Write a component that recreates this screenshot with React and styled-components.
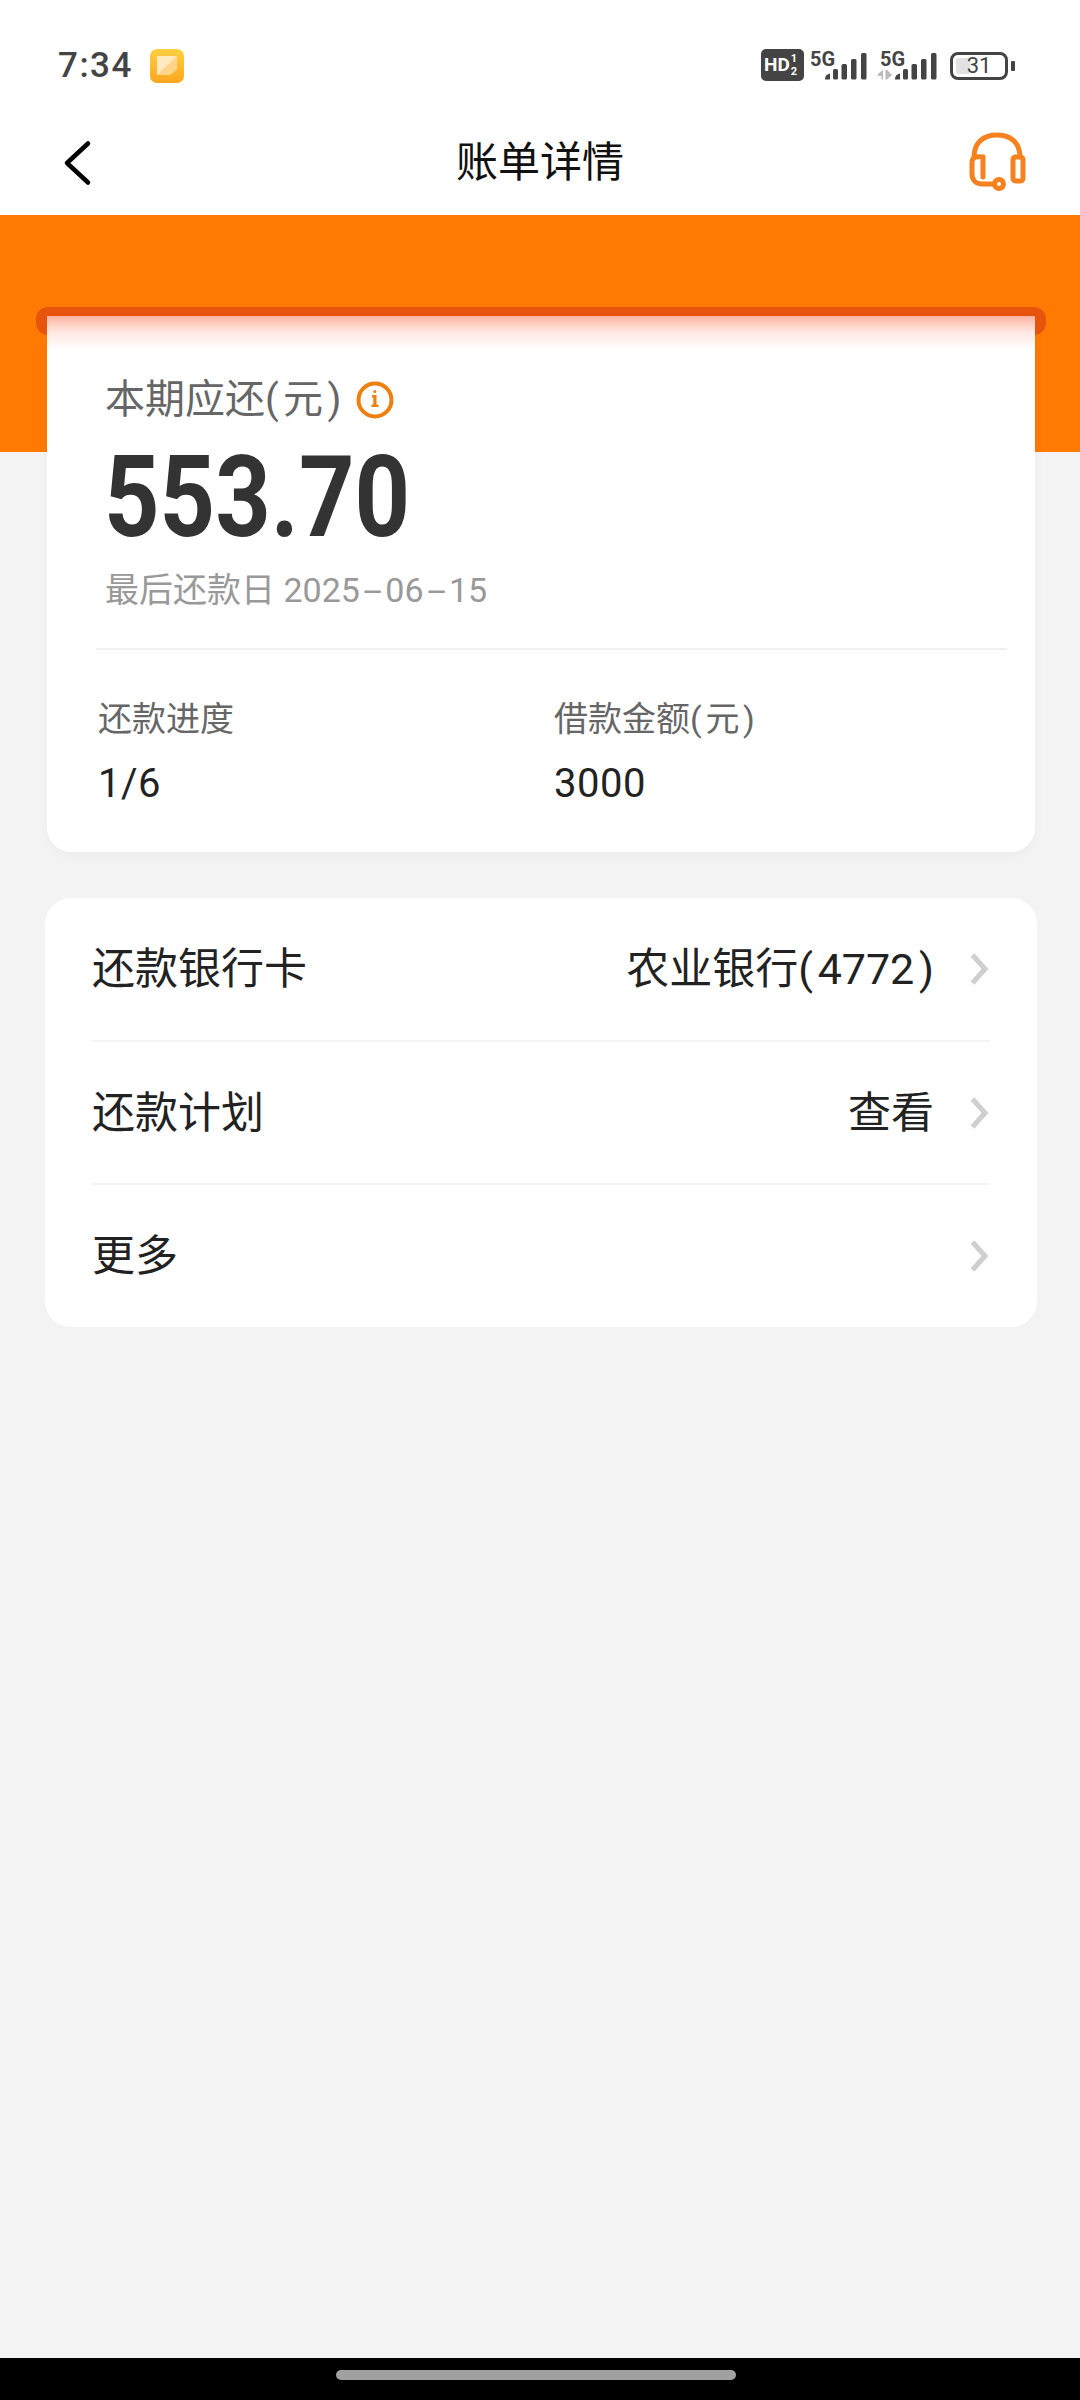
import React from "react";
import styled, { createGlobalStyle } from "styled-components";

const Global = createGlobalStyle`
  html, body { margin: 0; padding: 0; background: #f3f3f3; }
  * { box-sizing: border-box; }
`;
const FONT = `Roboto, "Noto Sans CJK SC", sans-serif`;

const Page = styled.div`
  width: 1080px; height: 2400px; display: flex; flex-direction: column;
  background: #f3f3f3; font-family: ${FONT}; overflow: hidden;
`;
const StatusBar = styled.div`
  height: 130px; background: #fff; display: flex; align-items: flex-start;
  justify-content: space-between; padding: 49px 65px 0 58px;
`;
const StatusLeft = styled.div`display: flex; align-items: center; gap: 17px; height: 34px;`;
const Time = styled.span`font-size: 35px; font-weight: 500; color: #444; letter-spacing: 1.5px; line-height: 34px;`;
const NoteIcon = styled.svg`width: 34px; height: 34px; display: block;`;
const StatusRight = styled.div`display: flex; align-items: flex-start; height: 34px;`;
const HdBadge = styled.div`
  width: 43px; height: 32px; background: #444; border-radius: 5px; color: #fff;
  display: flex; align-items: center; padding-left: 3px; font-family: Roboto, sans-serif; font-weight: 700;
  margin-right: 6px;
`;
const HdText = styled.span`font-size: 19px; line-height: 32px;`;
const HdSub = styled.span`display: flex; flex-direction: column; font-size: 11px; line-height: 13px; margin-left: 1px;`;
const SignalWrap = styled.div`position: relative; width: 57px; height: 34px; margin-right: 13px;`;
const FiveG = styled.span`
  position: absolute; left: 0; top: 0; font: 700 20px/20px Roboto, sans-serif; color: #444;
`;
const SignalBars = styled.svg`width: 57px; height: 34px; display: block; overflow: visible;`;
const Battery = styled.div`
  position: relative; width: 58px; height: 28px; margin-top: 3px; border: 3px solid #444; border-radius: 8px;
  display: flex; align-items: center; justify-content: center; font-size: 22px; color: #444;
  font-family: Roboto, sans-serif;
`;
const BatteryFill = styled.div`
  position: absolute; left: 3px; top: 3px; bottom: 3px; width: 14px; background: #e2e2e2; border-radius: 2px;
`;
const BatteryLabel = styled.span`position: relative; line-height: 22px;`;
const BatteryNub = styled.div`width: 4px; height: 10px; background: #444; border-radius: 1px; margin: 12px 0 0 3px;`;

const NavBar = styled.div`
  height: 85px; background: #fff; display: flex; align-items: center; justify-content: space-between;
  padding: 0 52px 20px 62px;
`;
const Title = styled.h1`
  flex: 1; margin: 0; text-align: center; font-size: 42px; font-weight: 400; color: #111;
  line-height: 60px; padding-left: 22px;
`;
const NavIcon = styled.svg`display: block; flex: none;`;

const Banner = styled.div`height: 237px; background: #ff7a03; padding: 92px 34px 0 36px; flex: none;`;
const Slot = styled.div`height: 28px; background: #e9540c; border-radius: 12px;`;

const SummaryCard = styled.section`
  margin: -136px 45px 0 47px; height: 536px; background: #fff; border-radius: 0 0 24px 24px;
  position: relative; box-shadow: 0 4px 12px rgba(0,0,0,.03);
  display: flex; flex-direction: column;
`;
const CardGlow = styled.div`
  position: absolute; left: 0; right: 0; top: 0; height: 34px;
  background: linear-gradient(#ffb3a0, #ffe6e0 45%, #ffffff);
`;
const Heading = styled.div`padding: 59px 0 0 58px; position: relative;`;
const DueLabel = styled.div`display: flex; align-items: center; gap: 15px; height: 50px; font-size: 40px; color: #666; line-height: 50px;`;
const InfoIcon = styled.svg`display: block; width: 38px; height: 38px;`;
const Amount = styled.div`
  font-family: Roboto, sans-serif; font-weight: 700; color: #333; width: 400px; margin-left: -1px;
  font-size: 114px; line-height: 114px; margin-top: 15px; transform: scaleX(.85); transform-origin: left center;
`;
const DueDate = styled.div`font-size: 34px; color: #999; line-height: 46px; margin-top: 13px;`;
const DateDash = styled.span`display: inline-block; margin: 0 8px; transform: scaleX(2);`;
const OpenParen = styled.span`margin-right: .11em;`;
const CloseParen = styled.span`margin-left: .11em;`;
const Divider = styled.div`height: 2px; background: #f1f1f1; margin: 35px 28px 0 49px;`;
const Stats = styled.div`display: grid; grid-template-columns: 456px 1fr; padding: 46px 0 0 51px;`;
const Stat = styled.div`display: flex; flex-direction: column;`;
const StatLabel = styled.div`font-size: 34px; color: #666; line-height: 46px;`;
const StatValue = styled.div`font-size: 40px; letter-spacing: .5px; color: #222; line-height: 50px; margin-top: 17px;`;

const ListCard = styled.section`
  margin: 46px 43px 0 45px; background: #fff; border-radius: 26px; padding: 0 47px; height: 429px;
  display: flex; flex-direction: column;
`;
const Row = styled.div`
  flex: 1; display: flex; align-items: center; justify-content: space-between;
  border-bottom: ${p => (p.$last ? "none" : "2px solid #f4f4f4")};
`;
const RowLabel = styled.div`font-size: 43px; color: #222; line-height: 60px;`;
const RowRight = styled.div`display: flex; align-items: center;`;
const RowValue = styled.div`font-size: 43px; color: #222; line-height: 60px; margin-right: 36px;`;
const Chevron = styled.svg`width: 20px; height: 32px; display: block;`;

const Spacer = styled.div`flex: 1;`;
const GestureBar = styled.div`height: 42px; background: #000; flex: none; display: flex; justify-content: center; padding: 12px 9px 0 0;`;
const Handle = styled.div`width: 400px; height: 10px; background: #a0a0a0; border-radius: 5px;`;

const SignalGlyph = ({ arrows }) => (
  <SignalWrap>
    <FiveG>5G</FiveG>
    <SignalBars viewBox="0 0 57 34">
      {arrows && (
        <g fill="#bbb">
          <path d="M-2 25l5-4v9.500h-1.500v-3.500H-2zM5.500 21H7l5 5-5 4.500H5.500z" />
        </g>
      )}
      <g fill="#444">
        <path d="M15 30c0-3 2-5 5-5.500V30.500h-5z" />
        <rect x="23" y="20" width="5" height="10.500" rx="1.500" />
        <rect x="31.500" y="15" width="5.500" height="15.500" rx="1.500" />
        <rect x="41" y="10" width="5.500" height="20.500" rx="1.500" />
        <rect x="51" y="4" width="5.500" height="26.500" rx="1.500" />
      </g>
    </SignalBars>
  </SignalWrap>
);

const Arrow = () => (
  <Chevron viewBox="0 0 20 32">
    <path d="M2.500 2 L15 16 L2.500 30" fill="none" stroke="#cfcfcf" strokeWidth="5" />
  </Chevron>
);

export default function App() {
  return (
    <Page>
      <Global />
      <StatusBar>
        <StatusLeft>
          <Time>7:34</Time>
          <NoteIcon viewBox="0 0 34 34">
            <defs>
              <linearGradient id="ng" x1="0" y1="0" x2="0" y2="1">
                <stop offset="0" stopColor="#ffd042" />
                <stop offset="1" stopColor="#fca61f" />
              </linearGradient>
            </defs>
            <rect width="34" height="34" rx="7" fill="url(#ng)" />
            <path d="M7 7h20v13l-7 6H7z" fill="#ffe9bd" />
            <path d="M7 26L27 7v13l-7 6z" fill="#ffd58a" />
          </NoteIcon>
        </StatusLeft>
        <StatusRight>
          <HdBadge>
            <HdText>HD</HdText>
            <HdSub><span>1</span><span>2</span></HdSub>
          </HdBadge>
          <SignalGlyph />
          <SignalGlyph arrows />
          <Battery>
            <BatteryFill />
            <BatteryLabel>31</BatteryLabel>
          </Battery>
          <BatteryNub />
        </StatusRight>
      </StatusBar>

      <NavBar>
        <NavIcon width="30" height="46" viewBox="0 0 30 46">
          <path d="M26 3.500L5 23l21 19.500" fill="none" stroke="#000" strokeWidth="4.500" strokeLinecap="round" strokeLinejoin="round" />
        </NavIcon>
        <Title>账单详情</Title>
        <NavIcon width="62" height="62" viewBox="0 2 62 62">
          <g fill="none" stroke="#f5821f" strokeWidth="5" strokeLinecap="round" strokeLinejoin="round">
            <path d="M8 27C8 12 18 5 31 5s23 7 23 22" />
            <rect x="47" y="27" width="10" height="24" rx="2.500" />
            <path d="M17 27v20M17 27c-6-1-11 0-11 5v12c0 6 4 10 10 10h12" />
            <circle cx="33" cy="54" r="4.500" />
          </g>
        </NavIcon>
      </NavBar>

      <Banner><Slot /></Banner>

      <SummaryCard>
        <CardGlow />
        <Heading>
          <DueLabel>
            <span>本期应还<OpenParen>(</OpenParen>元<CloseParen>)</CloseParen></span>
            <InfoIcon viewBox="0 0 38 38">
              <circle cx="19" cy="19" r="16.500" fill="none" stroke="#ee8010" strokeWidth="4" />
              <path d="M16 14h4.500v9.500h2V26h-7v-2.500h1.800V16.500H16z" fill="#ee8010" />
              <circle cx="18.800" cy="10.500" r="1.500" fill="#ee8010" />
            </InfoIcon>
          </DueLabel>
          <Amount>553.70</Amount>
          <DueDate>最后还款日 2025<DateDash>-</DateDash>06<DateDash>-</DateDash>15</DueDate>
        </Heading>
        <Divider />
        <Stats>
          <Stat>
            <StatLabel>还款进度</StatLabel>
            <StatValue>1/6</StatValue>
          </Stat>
          <Stat>
            <StatLabel>借款金额<OpenParen>(</OpenParen>元<CloseParen>)</CloseParen></StatLabel>
            <StatValue>3000</StatValue>
          </Stat>
        </Stats>
      </SummaryCard>

      <ListCard>
        <Row>
          <RowLabel>还款银行卡</RowLabel>
          <RowRight><RowValue>农业银行<OpenParen>(</OpenParen>4772<CloseParen>)</CloseParen></RowValue><Arrow /></RowRight>
        </Row>
        <Row>
          <RowLabel>还款计划</RowLabel>
          <RowRight><RowValue>查看</RowValue><Arrow /></RowRight>
        </Row>
        <Row $last>
          <RowLabel>更多</RowLabel>
          <RowRight><Arrow /></RowRight>
        </Row>
      </ListCard>

      <Spacer />
      <GestureBar><Handle /></GestureBar>
    </Page>
  );
}
